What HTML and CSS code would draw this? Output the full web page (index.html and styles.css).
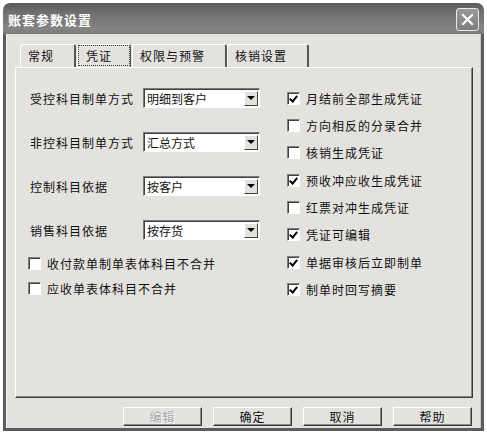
FILE: index.html
```html
<!DOCTYPE html>
<html lang="zh-CN">

<head>
    <meta charset="UTF-8" />
    <title>账套参数设置</title>
    <link rel="stylesheet" href="styles.css">
</head>

<body>
    <div class="window">
        <div class="titlebar">
            <span class="title">账套参数设置</span>
            <button class="close-btn">
                <svg width="13" height="13" viewBox="0 0 13 13">
                    <path d="M2 2 L11 11 M11 2 L2 11" stroke="#fff" stroke-width="2.2" stroke-linecap="square" />
                </svg>
            </button>
        </div>

        <div class="client">
            <!-- 页签 -->
            <div class="tabs">
                <div class="tab">常规</div>
                <div class="tab active"><span>凭证</span></div>
                <div class="tab">权限与预警</div>
                <div class="tab">核销设置</div>
            </div>

            <div class="panel">
                <div class="col-left">
                    <div class="field">
                        <label>受控科目制单方式</label>
                        <div class="combo"><span>明细到客户</span><i class="drop"></i></div>
                    </div>
                    <div class="field">
                        <label>非控科目制单方式</label>
                        <div class="combo"><span>汇总方式</span><i class="drop"></i></div>
                    </div>
                    <div class="field">
                        <label>控制科目依据</label>
                        <div class="combo"><span>按客户</span><i class="drop"></i></div>
                    </div>
                    <div class="field">
                        <label>销售科目依据</label>
                        <div class="combo"><span>按存货</span><i class="drop"></i></div>
                    </div>

                    <div class="checks-left">
                        <div class="check"><span class="box"></span>收付款单制单表体科目不合并</div>
                        <div class="check"><span class="box"></span>应收单表体科目不合并</div>
                    </div>
                </div>

                <div class="col-right">
                    <div class="check"><span class="box checked"></span>月结前全部生成凭证</div>
                    <div class="check"><span class="box"></span>方向相反的分录合并</div>
                    <div class="check"><span class="box"></span>核销生成凭证</div>
                    <div class="check"><span class="box checked"></span>预收冲应收生成凭证</div>
                    <div class="check"><span class="box"></span>红票对冲生成凭证</div>
                    <div class="check"><span class="box checked"></span>凭证可编辑</div>
                    <div class="check"><span class="box checked"></span>单据审核后立即制单</div>
                    <div class="check"><span class="box checked"></span>制单时回写摘要</div>
                </div>
            </div>

            <div class="buttons">
                <button class="btn disabled">编辑</button>
                <button class="btn">确定</button>
                <button class="btn">取消</button>
                <button class="btn">帮助</button>
            </div>
        </div>
    </div>
</body>

</html>
```

FILE: styles.css
```css
body {
    margin: 0;
    background: #fff;
    font-family: 'Noto Sans CJK SC', 'Noto Sans', sans-serif;
    font-size: 12px;
    color: #111;
}

.window {
    margin: 3px 0 0 3px;
    width: 481px;
    height: 428px;
    display: flex;
    flex-direction: column;
}

.titlebar {
    height: 31px;
    flex-shrink: 0;
    display: flex;
    align-items: center;
    padding: 2px 5px 0 5px;
    box-sizing: border-box;
    border-radius: 7px 7px 0 0;
    background: linear-gradient(#5a5a5a, #727272 35%, #848484 85%, #7a7a7a);
}

.title {
    color: #fff;
    font-weight: bold;
    font-size: 13px;
    letter-spacing: 1px;
}

.close-btn {
    margin-left: auto;
    width: 23px;
    height: 23px;
    padding: 0;
    display: flex;
    align-items: center;
    justify-content: center;
    border: 1px solid #e8e8e8;
    border-radius: 3px;
    background: linear-gradient(#9a9a9a, #7e7e7e);
}

.client {
    flex: 1;
    display: flex;
    flex-direction: column;
    background: #e3e2df;
    border: 3px solid #5c5c5c;
    border-top: none;
    box-shadow: inset 1px 0 #f8f8f8, inset -1px 0 #c8c8c8;
    padding: 10px 8px 0 9px;
}

/* 页签 */
.tabs {
    display: flex;
    height: 23px;
    padding-left: 5px;
}

.tab {
    padding: 0 20px 0 7px;
    line-height: 22px;
    letter-spacing: 1px;
    border-top: 1px solid #fff;
    border-left: 1px solid #fff;
    border-right: 2px solid #555;
    border-radius: 3px 3px 0 0;
}

.tab.active {
    padding: 0;
    border-right-width: 1px;
    margin: 0 1px;
}

.tab.active span {
    display: block;
    height: 19px;
    line-height: 19px;
    padding: 0 17px 0 7px;
    border: 1px dotted #333;
}

.panel {
    height: 331px;
    box-sizing: border-box;
    display: flex;
    padding: 20px 0 0 12px;
    border-top: 1px solid #fff;
    border-left: 1px solid #fff;
    border-right: 1px solid #3a3a3a;
    border-bottom: 1px solid #3a3a3a;
    box-shadow: inset -1px -1px #8a8a8a;
}

.col-left {
    width: 259px;
    display: flex;
    flex-direction: column;
    gap: 24px;
}

.field {
    display: flex;
    align-items: center;
    height: 20px;
}

.field label {
    width: 113px;
    padding-left: 2px;
    letter-spacing: 1px;
}

.combo {
    width: 117px;
    height: 20px;
    box-sizing: border-box;
    display: flex;
    align-items: center;
    background: #fff;
    border-top: 1px solid #7a7a7a;
    border-left: 1px solid #7a7a7a;
    border-right: 1px solid #fff;
    border-bottom: 1px solid #fff;
    box-shadow: inset 1px 1px #404040, 0 0 0 0 transparent;
    padding: 1px 1px 1px 3px;
}

.combo span {
    flex: 1;
    padding-top: 1px;
}

.drop {
    width: 14px;
    height: 15px;
    box-sizing: border-box;
    background: #e3e2df;
    border-top: 1px solid #fff;
    border-left: 1px solid #fff;
    border-right: 1px solid #404040;
    border-bottom: 1px solid #404040;
    display: flex;
    align-items: center;
    justify-content: center;
}

.drop::after {
    content: "";
    border-left: 4px solid transparent;
    border-right: 4px solid transparent;
    border-top: 4px solid #000;
}

.checks-left {
    margin-top: -9px;
    display: flex;
    flex-direction: column;
    gap: 9px;
}

.check {
    display: flex;
    align-items: center;
    height: 16px;
    letter-spacing: 1px;
}

.box {
    width: 13px;
    height: 13px;
    box-sizing: border-box;
    margin-right: 6px;
    background: #fff;
    border-top: 1px solid #808080;
    border-left: 1px solid #808080;
    border-right: 1px solid #fff;
    border-bottom: 1px solid #fff;
    box-shadow: inset 1px 1px #404040;
    position: relative;
}

.box.checked::after {
    content: "";
    position: absolute;
    left: 3px;
    top: 1px;
    width: 3px;
    height: 6px;
    border-right: 2px solid #000;
    border-bottom: 2px solid #000;
    transform: rotate(40deg);
}

.col-right {
    margin-top: 2px;
    display: flex;
    flex-direction: column;
    gap: 11.4px;
}

.buttons {
    display: flex;
    justify-content: flex-end;
    gap: 11px;
    margin-top: 9px;
    padding-right: 1px;
}

.btn {
    width: 79px;
    height: 19px;
    padding: 0;
    font-family: inherit;
    font-size: 12px;
    letter-spacing: 1px;
    color: #111;
    background: #e3e2df;
    border-top: 1px solid #fff;
    border-left: 1px solid #fff;
    border-right: 1px solid #3a3a3a;
    border-bottom: 1px solid #3a3a3a;
    box-shadow: inset -1px -1px #8a8a8a;
}

.btn.disabled {
    color: #a5a5a5;
    text-shadow: 1px 1px #fff;
}
```
